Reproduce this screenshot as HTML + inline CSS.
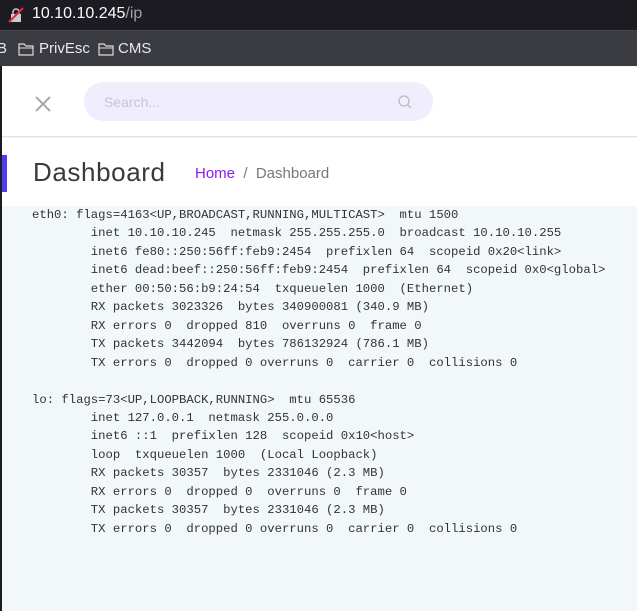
<!DOCTYPE html>
<html><head><style>
*{margin:0;padding:0;box-sizing:border-box}
body{width:637px;height:611px;overflow:hidden;background:#f2f7fa;font-family:"Liberation Sans",sans-serif;position:relative}
.addr{position:absolute;left:0;top:0;width:637px;height:30px;background:#1c1b22;color:#fbfbfe;font-size:16px}
.addr .u{position:absolute;left:32px;top:5px}
.addr .u span{color:#a0a0a8}
.bm{position:absolute;left:0;top:30px;width:637px;height:36px;background:#3b3c42;border-top:1px solid #45464c;color:#e8e8ee;font-size:15px}
.bm div{position:absolute;top:9px}
.page{position:absolute;left:2px;top:67px;width:635px;height:544px;background:#f2f7fa}
.lb{position:absolute;left:0;top:66px;width:2px;height:545px;background:#1c1b22}
.hdr{position:absolute;left:0;top:0;width:635px;height:70px;background:#fff;border-bottom:1px solid #dde3e6}
.srch{position:absolute;left:82px;top:15px;width:349px;height:39px;border-radius:20px;background:#f0edfc;color:#c8c4d4;font-size:14px;padding:12px 0 0 20px}
.dash{position:absolute;left:0;top:71px;width:635px;height:68px;background:#fff}
.acc{position:absolute;left:0;top:17px;width:5px;height:37px;background:#4b3df0}
.dash h1{position:absolute;left:31px;top:19px;font-weight:normal;font-size:26px;color:#3a3a3a;letter-spacing:.6px}
.bc{position:absolute;left:193px;top:27px;font-size:15px;color:#777}
.bc a{color:#8a18f0}
pre{position:absolute;left:32px;top:206px;font-family:"Liberation Mono",monospace;font-size:12.25px;line-height:18.45px;color:#333}
</style></head><body>
<div class="addr">
<svg style="position:absolute;left:8px;top:7px" width="16" height="16"><rect x="3" y="7" width="10" height="8" fill="#ccc"/><path d="M5 7V5a3 3 0 0 1 6 0v2" stroke="#ccc" stroke-width="1.5" fill="none"/><line x1="1" y1="15" x2="15" y2="1" stroke="#e22850" stroke-width="2"/></svg>
<div class="u">10.10.10.245<span>/ip</span></div></div>
<div class="bm">
<div style="left:-3px">B</div>
<svg style="position:absolute;left:18px;top:11px" width="16" height="14"><path d="M1 2h5l2 2h7v9H1z" fill="none" stroke="#ddd" stroke-width="1.2"/><line x1="1" y1="6" x2="15" y2="6" stroke="#ddd"/></svg>
<div style="left:39px">PrivEsc</div>
<svg style="position:absolute;left:98px;top:11px" width="16" height="14"><path d="M1 2h5l2 2h7v9H1z" fill="none" stroke="#ddd" stroke-width="1.2"/><line x1="1" y1="6" x2="15" y2="6" stroke="#ddd"/></svg>
<div style="left:118px">CMS</div>
</div>
<div class="lb"></div>
<div class="page">
<div class="hdr">
<svg style="position:absolute;left:31px;top:27px" width="20" height="20"><path d="M3 3L17 17M17 3L3 17" stroke="#aaa" stroke-width="2"/></svg>
<div class="srch">Search...</div>
<svg style="position:absolute;left:395px;top:27px" width="16" height="16"><circle cx="7" cy="7" r="5" stroke="#bbb" stroke-width="1.3" fill="none"/><line x1="10.5" y1="10.5" x2="14" y2="14" stroke="#bbb" stroke-width="1.3"/></svg>
</div>
<div class="dash"><div class="acc"></div><h1>Dashboard</h1><div class="bc"><a>Home</a> &nbsp;/&nbsp; Dashboard</div></div>
</div>
<pre>eth0: flags=4163&lt;UP,BROADCAST,RUNNING,MULTICAST&gt;  mtu 1500
        inet 10.10.10.245  netmask 255.255.255.0  broadcast 10.10.10.255
        inet6 fe80::250:56ff:feb9:2454  prefixlen 64  scopeid 0x20&lt;link&gt;
        inet6 dead:beef::250:56ff:feb9:2454  prefixlen 64  scopeid 0x0&lt;global&gt;
        ether 00:50:56:b9:24:54  txqueuelen 1000  (Ethernet)
        RX packets 3023326  bytes 340900081 (340.9 MB)
        RX errors 0  dropped 810  overruns 0  frame 0
        TX packets 3442094  bytes 786132924 (786.1 MB)
        TX errors 0  dropped 0 overruns 0  carrier 0  collisions 0

lo: flags=73&lt;UP,LOOPBACK,RUNNING&gt;  mtu 65536
        inet 127.0.0.1  netmask 255.0.0.0
        inet6 ::1  prefixlen 128  scopeid 0x10&lt;host&gt;
        loop  txqueuelen 1000  (Local Loopback)
        RX packets 30357  bytes 2331046 (2.3 MB)
        RX errors 0  dropped 0  overruns 0  frame 0
        TX packets 30357  bytes 2331046 (2.3 MB)
        TX errors 0  dropped 0 overruns 0  carrier 0  collisions 0
</pre>
</body></html>
